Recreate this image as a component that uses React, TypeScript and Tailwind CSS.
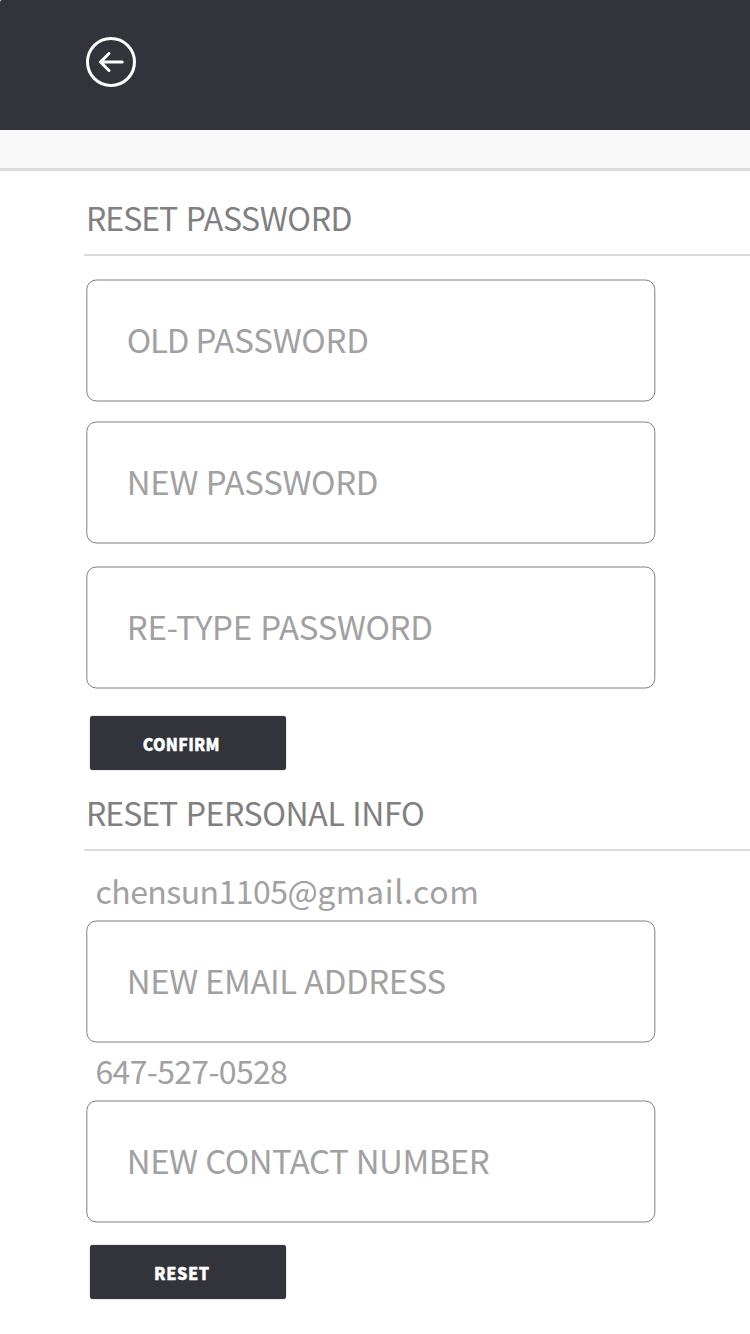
import React from "react";

function Heading({ children }: { children: React.ReactNode }) {
  return (
    <h2 className="ml-[84px] h-[67px] border-b-2 border-[#dbdbdb] pt-[4px] pl-[2px] text-[32px] leading-[48px] font-normal tracking-[-0.38px] whitespace-nowrap text-[#808080]">
      <span className="tracking-[-1px] [word-spacing:2.3px]">RESET </span>
      {children}
    </h2>
  );
}

function Field({ children, gap = "", text = "" }: { children: React.ReactNode; gap?: string; text?: string }) {
  return (
    <div
      className={`ml-[86px] flex h-[122px] w-[569px] translate-x-[0.3px] translate-y-[0.5px] items-center rounded-[10px] border border-[#808080] pb-[5px] pl-[39.5px] text-[33px] leading-[48px] whitespace-nowrap text-[#a1a1a1] ${gap}`}
    >
      <span className={text}>{children}</span>
    </div>
  );
}

function Button({ label, gap, text }: { label: string; gap: string; text: string }) {
  return (
    <button
      className={`ml-[90px] flex h-[54px] w-[196px] items-center justify-center rounded-[3px] bg-[#33333b] pt-[2px] pr-[13px] text-[17.5px] leading-[24px] font-black text-white shadow-[0_0_1px_#33333b] ${gap}`}
    >
      <span className={`[-webkit-text-stroke:0.4px_white] ${text}`}>{label}</span>
    </button>
  );
}

export default function App() {
  return (
    <main className="flex h-[1334px] w-[750px] flex-col overflow-hidden bg-white font-['Noto_Sans_CJK_SC',sans-serif]">
      <header className="h-[130px] shrink-0 rounded-tl-[2px] bg-[#33333b] pt-[37px] pl-[86px]">
        <svg width="50" height="50" viewBox="0 0 50 50" fill="none" stroke="white" strokeWidth="3">
          <circle cx="25" cy="25" r="23.5" />
          <path d="M36.2 25H14.5M23 16.5L14.5 25L23 33.5" strokeLinecap="round" strokeLinejoin="round" />
        </svg>
      </header>
      <div className="h-[41px] shrink-0 border-b-[3px] border-[#dbdbdb] bg-[#f8f8f8]" />
      <section className="flex flex-col pt-[18px]">
        <Heading>PASSWORD</Heading>
        <Field gap="mt-[23px]" text="tracking-[-0.2px]">
          <span className="tracking-[-1.2px]">OLD</span> PASSWORD
        </Field>
        <Field gap="mt-[20px]" text="tracking-[-0.3px] [word-spacing:0.5px]">NEW PASSWORD</Field>
        <Field gap="mt-[23px]" text="tracking-[-0.32px] [word-spacing:1.5px]">RE-TYPE PASSWORD</Field>
        <Button label="CONFIRM" gap="mt-[28px]" text="origin-center scale-x-[0.91] tracking-[0.3px]" />
      </section>
      <section className="flex flex-col pt-[14px]">
        <Heading>
          <span className="[word-spacing:1px]">PERSONAL INFO</span>
        </Heading>
        <p className="mt-[15px] ml-[95.5px] h-[54px] text-[32px] leading-[48px] whitespace-nowrap text-[#a1a1a1]">
          <span className="tracking-[-0.55px]">chensun1105@</span>
          <span className="tracking-[0.65px]">gmail.com</span>
        </p>
        <Field text="tracking-[-0.43px] [word-spacing:0.3px]">NEW EMAIL ADDRESS</Field>
        <p className="mt-[4px] ml-[95.5px] h-[54px] text-[32px] leading-[48px] tracking-[-0.68px] text-[#a1a1a1]">647-527-0528</p>
        <Field text="tracking-[-0.5px] [word-spacing:0.7px]">NEW CONTACT NUMBER</Field>
        <Button label="RESET" gap="mt-[23px]" text="origin-center scale-x-[0.93] tracking-[0.6px]" />
      </section>
    </main>
  );
}
